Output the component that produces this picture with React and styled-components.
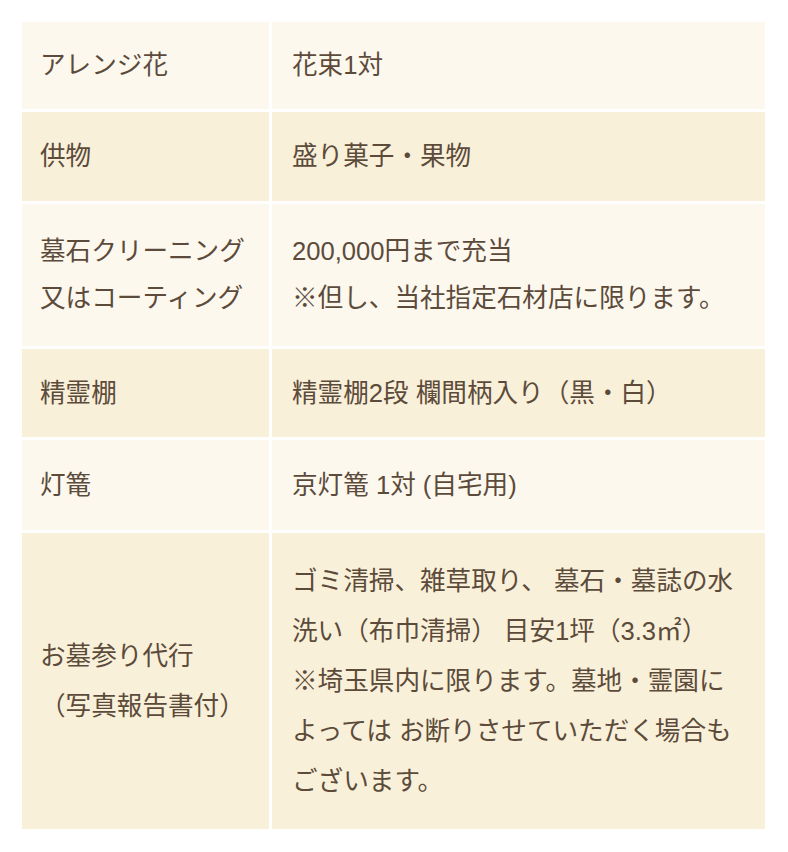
import styled, { createGlobalStyle } from "styled-components";

const GlobalStyle = createGlobalStyle`
  html, body {
    margin: 0;
    padding: 0;
    background: #ffffff;
  }
  body {
    font-family: "Liberation Sans", "Noto Sans CJK JP", sans-serif;
    color: #5c4b3b;
  }
`;

const rows = [
  { label: ["アレンジ花"], value: ["花束1対"] },
  { label: ["供物"], value: ["盛り菓子・果物"], pad: 21 },
  {
    label: ["墓石クリーニング", "又はコーティング"],
    value: ["200,000円まで充当", "※但し、当社指定石材店に限ります。"],
    pad: 24,
  },
  { label: ["精霊棚"], value: ["精霊棚2段 欄間柄入り（黒・白）"], pad: 20.5 },
  { label: ["灯篭"], value: ["京灯篭 1対 (自宅用)"], pad: 21.5 },
  {
    label: ["お墓参り代行", "（写真報告書付）"],
    value: [
      "ゴミ清掃、雑草取り、 墓石・墓誌の水",
      "洗い（布巾清掃） 目安1坪（3.3㎡）",
      "※埼玉県内に限ります。墓地・霊園に",
      "よっては お断りさせていただく場合も",
      "ございます。",
    ],
    pad: 23,
    lh: 50,
  },
];

const App = () => {
  return (
    <>
      <GlobalStyle />
      <Page>
        <Table>
          {rows.map((row, i) => {
            const tone = i % 2 === 0 ? "light" : "dark";
            return [
              <Label key={`l${i}`} $tone={tone} $pad={row.pad} $lh={row.lh}>
                {row.label.map((line) => (
                  <Line key={line}>{line}</Line>
                ))}
              </Label>,
              <Value key={`v${i}`} $tone={tone} $pad={row.pad} $lh={row.lh}>
                {row.value.map((line) => (
                  <Line key={line}>{line}</Line>
                ))}
              </Value>,
            ];
          })}
        </Table>
      </Page>
    </>
  );
};
export default App;

const Page = styled.div`
  padding: 22px 23px 22px 22px;
`;

const Table = styled.div`
  display: grid;
  grid-template-columns: 247px 1fr;
  gap: 3px;
`;

const Cell = styled.div`
  display: flex;
  flex-direction: column;
  justify-content: center;
  background: ${({ $tone }) => ($tone === "dark" ? "#f9f0d9" : "#fcf8ee")};
  padding: ${({ $pad }) => $pad || 20}px 0;
  font-size: 25.6px;
  line-height: ${({ $lh }) => $lh || 47}px;
  color: #5c4b3b;
`;

const Label = styled(Cell)`
  padding-left: 18px;
  padding-right: 10px;
`;

const Value = styled(Cell)`
  padding-left: 20px;
  padding-right: 10px;
`;

const Line = styled.div`
  white-space: nowrap;
`;
